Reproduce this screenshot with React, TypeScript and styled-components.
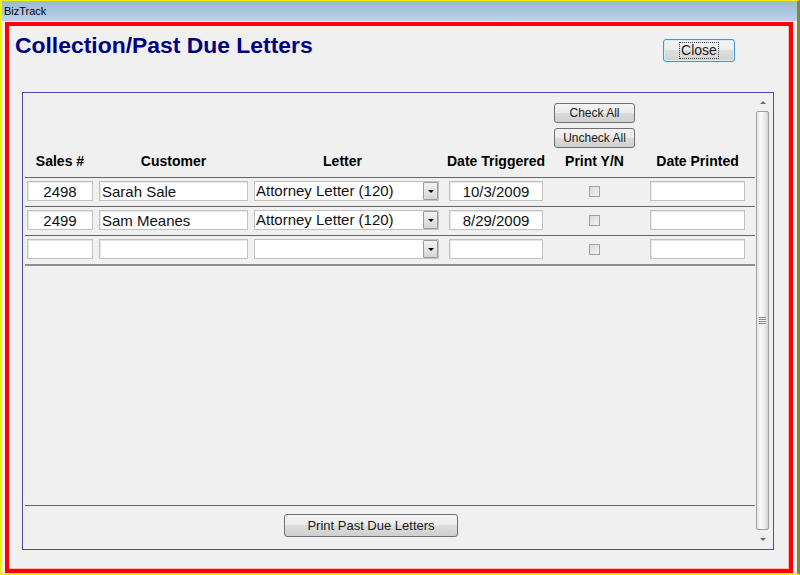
import React from 'react';
import styled, { createGlobalStyle } from 'styled-components';

const GlobalStyle = createGlobalStyle`
  html, body {
    margin: 0;
    padding: 0;
  }
  body {
    width: 800px;
    height: 575px;
    overflow: hidden;
    background: #f0f0f0;
    font-family: "Liberation Sans", Arial, sans-serif;
  }
  * {
    box-sizing: border-box;
  }
`;

const Frame = styled.div`
  width: 800px;
  height: 575px;
  display: flex;
  flex-direction: column;
  background: #f0f0f0;
  border-top: 1px solid #f2f200;
  border-left: 2px solid #f2f200;
  border-bottom: 2px solid #f2f200;
  border-right: 3px solid #7c8a3a;
`;

const TitleBar = styled.div`
  height: 20px;
  line-height: 20px;
  padding-left: 2px;
  font-size: 11px;
  color: #000;
  background: linear-gradient(#9db7d5, #bad2ea);
`;

const Body = styled.div`
  flex: 1;
  display: flex;
  padding: 1px 4px 0 3px;
`;

const RedFrame = styled.div`
  flex: 1;
  display: flex;
  flex-direction: column;
  border: 4px solid #ff0000;
  box-shadow: inset -1px -1px 0 #f6b8b8;
`;

const TopBar = styled.div`
  height: 66px;
  display: flex;
  justify-content: space-between;
  align-items: flex-start;
  padding: 7px 54px 0 6px;
`;

const Title = styled.h1`
  margin: 0;
  font-size: 22.9px;
  line-height: 25px;
  font-weight: bold;
  color: #000080;
`;

const BaseButton = styled.button<{ $w: number; $h: number; $size: number }>`
  width: ${({ $w }) => $w}px;
  height: ${({ $h }) => $h}px;
  padding: 0;
  border: 1px solid #707070;
  border-radius: 3px;
  background: linear-gradient(#f3f3f3 0%, #ebebeb 50%, #dddddd 50%, #cfcfcf 100%);
  font-family: "Liberation Sans", Arial, sans-serif;
  font-size: ${({ $size }) => $size}px;
  color: #1a1a1a;
  display: flex;
  align-items: center;
  justify-content: center;
`;

const CloseButton = styled(BaseButton)`
  margin-top: 6px;
  border-color: #3c9bd6;
  box-shadow: inset 0 0 0 1px #cfeefc;
  background: linear-gradient(#f4f4f4 0%, #ececec 50%, #dedede 50%, #d2d2d2 100%);
`;

const FocusText = styled.span`
  outline: 1px dotted #404040;
  padding: 0 1px;
  line-height: 15px;
`;

const Panel = styled.div`
  flex: 1;
  display: flex;
  margin: 0 15px 19px 13px;
  border: 1px solid #4b4ba8;
`;

const Main = styled.div`
  flex: 1;
  display: flex;
  flex-direction: column;
  padding-left: 2px;
`;

const Cols = styled.div`
  display: grid;
  grid-template-columns: 72px 155px 195px 94px 107px 95px;
  align-items: center;
  padding-left: 2px;
`;

const Tools = styled(Cols)`
  padding-top: 10px;
`;

const PrintCell = styled.div`
  grid-column: 5;
  display: flex;
  flex-direction: column;
  align-items: center;
  gap: 5px;
  padding-right: 4px;
`;

const HeadRow = styled(Cols)`
  height: 29px;
  padding-bottom: 3px;
`;

const HeadCell = styled.div<{ $w: number }>`
  width: ${({ $w }) => $w}px;
  display: flex;
  justify-content: center;
  white-space: nowrap;
  font-size: 14px;
  font-weight: bold;
  color: #000;
`;

const RowList = styled.div`
  border-bottom: 2px solid #8e8e8e;
`;

const Row = styled(Cols)`
  border-top: 1px solid #666;
  padding: 3px 0 5px 2px;
`;

const Field = styled.input<{ $w: number; $align?: string }>`
  width: ${({ $w }) => $w}px;
  height: 20px;
  margin: 0;
  padding: 0 2px;
  border: 1px solid #c2c2c2;
  box-shadow: inset 1px 1px 0 #e6e6e6;
  background: #fff;
  font-family: "Liberation Sans", Arial, sans-serif;
  font-size: 15px;
  color: #111;
  text-align: ${({ $align }) => $align || 'left'};
  outline: none;
`;

const Combo = styled.div`
  width: 185px;
  height: 20px;
  display: flex;
  align-items: stretch;
  border: 1px solid #c2c2c2;
  background: #fff;
`;

const ComboText = styled.div`
  flex: 1;
  padding-left: 1px;
  font-size: 15px;
  line-height: 18px;
  white-space: nowrap;
  overflow: hidden;
  color: #111;
`;

const ComboButton = styled.div`
  width: 15px;
  display: flex;
  align-items: center;
  justify-content: center;
  border: 1px solid #9a9a9a;
  border-radius: 1px;
  background: linear-gradient(#f2f2f2, #d6d6d6);
`;

const DownTriangle = styled.span<{ $color?: string; $size?: number }>`
  width: 0;
  height: 0;
  border-left: ${({ $size }) => $size || 3}px solid transparent;
  border-right: ${({ $size }) => $size || 3}px solid transparent;
  border-top: ${({ $size }) => $size || 3}px solid ${({ $color }) => $color || '#000'};
`;

const UpTriangle = styled.span`
  width: 0;
  height: 0;
  border-left: 3px solid transparent;
  border-right: 3px solid transparent;
  border-bottom: 3px solid #6a6a6a;
`;

const CheckBox = styled.span`
  width: 11px;
  height: 11px;
  border: 1px solid #a2a2a2;
  background: linear-gradient(135deg, #d8d8d8, #f4f4f4);
`;

const Spacer = styled.div`
  flex: 1;
`;

const Footer = styled.div`
  border-top: 1px solid #666;
  padding: 8px 0 12px 259px;
`;

const ScrollBar = styled.div`
  width: 15px;
  margin: 3px 3px 3px 0;
  display: flex;
  flex-direction: column;
  gap: 2px;
`;

const ScrollArrow = styled.div<{ $h: number }>`
  height: ${({ $h }) => $h}px;
  display: flex;
  align-items: center;
  justify-content: center;
`;

const Thumb = styled.div`
  flex: 1;
  margin: 0 1px;
  display: flex;
  flex-direction: column;
  align-items: center;
  justify-content: center;
  gap: 1px;
  border: 1px solid #a0a0a0;
  border-radius: 2px;
  background: linear-gradient(to right, #e4e4e4, #fafafa 35%, #e9e9e9 70%, #d2d2d2);
`;

const GripLine = styled.span`
  width: 7px;
  height: 1px;
  background: #8a8a8a;
  box-shadow: 0 1px 0 #f4f4f4;
`;

interface Letter {
  sales: string;
  customer: string;
  letter: string;
  triggered: string;
}

const rows: Letter[] = [
  { sales: '2498', customer: 'Sarah Sale', letter: 'Attorney Letter (120)', triggered: '10/3/2009' },
  { sales: '2499', customer: 'Sam Meanes', letter: 'Attorney Letter (120)', triggered: '8/29/2009' },
  { sales: '', customer: '', letter: '', triggered: '' },
];

export default function App() {
  return (
    <>
      <GlobalStyle />
      <Frame>
        <TitleBar>BizTrack</TitleBar>
        <Body>
          <RedFrame>
            <TopBar>
              <Title>Collection/Past Due Letters</Title>
              <CloseButton $w={72} $h={23} $size={14}>
                <FocusText>Close</FocusText>
              </CloseButton>
            </TopBar>

            <Panel>
              <Main>
                {/* Check / uncheck buttons above the Print column */}
                <Tools>
                  <PrintCell>
                    <BaseButton $w={81} $h={20} $size={12}>Check All</BaseButton>
                    <BaseButton $w={81} $h={20} $size={12}>Uncheck All</BaseButton>
                  </PrintCell>
                </Tools>

                <HeadRow>
                  <HeadCell $w={66}>Sales #</HeadCell>
                  <HeadCell $w={149}>Customer</HeadCell>
                  <HeadCell $w={177}>Letter</HeadCell>
                  <HeadCell $w={94}>Date Triggered</HeadCell>
                  <PrintCell>
                    <HeadCell $w={70}>Print Y/N</HeadCell>
                  </PrintCell>
                  <HeadCell $w={95}>Date Printed</HeadCell>
                </HeadRow>

                <RowList>
                  {rows.map((r, i) => (
                    <Row key={i}>
                      <Field $w={66} $align="center" readOnly value={r.sales} />
                      <Field $w={149} readOnly value={r.customer} />
                      <Combo>
                        <ComboText>{r.letter}</ComboText>
                        <ComboButton>
                          <DownTriangle $size={3.5} />
                        </ComboButton>
                      </Combo>
                      <Field $w={94} $align="center" readOnly value={r.triggered} />
                      <PrintCell>
                        <CheckBox />
                      </PrintCell>
                      <Field $w={95} readOnly value="" />
                    </Row>
                  ))}
                </RowList>

                <Spacer />

                <Footer>
                  <BaseButton $w={174} $h={23} $size={13}>Print Past Due Letters</BaseButton>
                </Footer>
              </Main>

              <ScrollBar>
                <ScrollArrow $h={13}>
                  <UpTriangle />
                </ScrollArrow>
                <Thumb>
                  <GripLine />
                  <GripLine />
                  <GripLine />
                  <GripLine />
                </Thumb>
                <ScrollArrow $h={14}>
                  <DownTriangle $color="#6a6a6a" />
                </ScrollArrow>
              </ScrollBar>
            </Panel>
          </RedFrame>
        </Body>
      </Frame>
    </>
  );
}
